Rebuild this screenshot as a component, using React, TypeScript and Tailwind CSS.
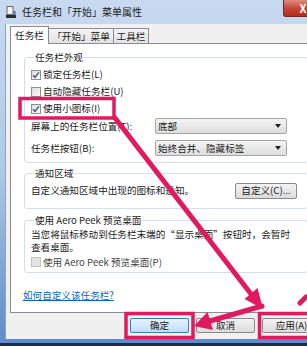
const Check = ({ checked, disabled }: { checked?: boolean; disabled?: boolean }) => (
  <span
    className={`flex h-[10px] w-[10px] shrink-0 items-center justify-center border ${
      disabled
        ? "border-[#c4c4c4] bg-[#e4e4e4]"
        : "border-[#8e8f8f] bg-gradient-to-br from-[#dcdcdc] to-[#fbfbfb]"
    }`}
  >
    {checked && (
      <svg width="8" height="8" viewBox="0 0 8 8">
        <path d="M1 4.2 L3 6.3 L7 1.4" fill="none" stroke="#4b5d7d" strokeWidth="1.5" />
      </svg>
    )}
  </span>
);

const Combo = ({ value }: { value: string }) => (
  <div className="flex h-[16px] w-[132px] items-center justify-between rounded-[2px] border border-[#a5a5a5] bg-gradient-to-b from-[#f4f4f4] to-[#dedede] pl-[2px] pr-[5px]">
    <span>{value}</span>
    <svg width="6" height="4" viewBox="0 0 6 4">
      <path d="M0 0 H6 L3 4 Z" fill="#1e1e1e" />
    </svg>
  </div>
);

const Btn = ({ label, primary }: { label: string; primary?: boolean }) => (
  <div
    className={`flex h-[15px] w-[59px] items-center justify-center rounded-[2px] border ${
      primary
        ? "border-[#3c7fb1] bg-gradient-to-b from-[#e6f3fd] to-[#bfdff8]"
        : "border-[#8a8a8a] bg-gradient-to-b from-[#f3f3f3] to-[#dcdcdc]"
    }`}
  >
    {label}
  </div>
);

export default function App() {
  return (
    <div className="relative h-[346px] w-[307px] overflow-hidden bg-[#1c2d3c] font-['Noto_Sans_CJK_SC',sans-serif] text-[9.6px] text-[#1b1b1b]">
      <div className="flex h-[343px] w-[330px] flex-col bg-gradient-to-b from-[#c8daf0] via-[#b0c8e8] to-[#5f8bc8]">
        {/* title bar */}
        <div className="flex h-[24px] items-center pl-[6px]">
          <svg width="10" height="12" viewBox="0 0 10 12">
            <rect x="1" y="0.5" width="6" height="8" fill="#f4f4f4" stroke="#6b6b6b" />
            <rect x="0" y="9" width="10" height="3" fill="#2c2c2c" />
            <rect x="7.5" y="5" width="2" height="4" fill="#3d74b8" />
          </svg>
          <span className="ml-[6px] text-[10px] leading-[12px] text-[#1a1a1a]">任务栏和「开始」菜单属性</span>
          <div className="mr-[7px] ml-auto flex h-[17px] w-[40px] items-center justify-center self-start rounded-b-[3px] border border-t-0 border-[#6b2a26] bg-gradient-to-b from-[#e08b7c] via-[#c8473a] to-[#b8281e]">
            <span className="text-[11px] font-bold leading-none text-white">X</span>
          </div>
        </div>

        {/* window body */}
        <div className="ml-[5px] mr-[5px] flex h-[315px] flex-col border-l border-[#8aa4c4] bg-[#f0f0f0] pl-[4px] pt-[2px]">
          {/* tabs */}
          <div className="relative z-10 flex h-[17px] items-end">
            <div className="-mb-[1px] flex h-[18px] w-[39px] items-center justify-center border border-b-0 border-[#898c95] bg-white">
              任务栏
            </div>
            <div className="flex h-[15px] w-[65px] items-center justify-center border border-b-0 border-l-0 border-[#898c95] bg-gradient-to-b from-[#f4f4f4] to-[#e2e2e2]">
              「开始」菜单
            </div>
            <div className="flex h-[15px] w-[35px] items-center justify-center border border-b-0 border-l-0 border-[#898c95] bg-gradient-to-b from-[#f4f4f4] to-[#e2e2e2]">
              工具栏
            </div>
          </div>

          {/* tab panel */}
          <div className="flex h-[270px] w-[312px] flex-col border border-[#898c95] bg-white px-[13px]">
            <fieldset className="mt-[7px] rounded-[3px] border border-[#d5dfe5] pb-[6px] pl-[6px] pr-[10px]">
              <legend className="ml-[3px] px-[1px] leading-[12px]">任务栏外观</legend>
              <div className="mt-[3px] flex h-[17px] items-center gap-[2px]">
                <Check checked />
                <span>锁定任务栏(L)</span>
              </div>
              <div className="flex h-[17px] items-center gap-[2px]">
                <Check />
                <span>自动隐藏任务栏(U)</span>
              </div>
              <div className="flex h-[17px] items-center gap-[2px]">
                <Check checked />
                <span>使用小图标(I)</span>
              </div>
              <div className="mt-[1px] flex h-[16px] items-center">
                <span className="w-[124px]">屏幕上的任务栏位置(T):</span>
                <Combo value="底部" />
              </div>
              <div className="mt-[6px] flex h-[16px] items-center">
                <span className="w-[124px]">任务栏按钮(B):</span>
                <Combo value="始终合并、隐藏标签" />
              </div>
            </fieldset>

            <fieldset className="mt-[4px] rounded-[3px] border border-[#d5dfe5] pb-[9px] pl-[6px] pr-[10px]">
              <legend className="ml-[3px] px-[1px] leading-[12px]">通知区域</legend>
              <div className="mt-[3px] flex h-[17px] items-center justify-between">
                <span>自定义通知区域中出现的图标和通知。</span>
                <div className="flex h-[16px] w-[62px] items-center justify-center rounded-[2px] border border-[#8a8a8a] bg-gradient-to-b from-[#f3f3f3] to-[#dcdcdc]">
                  自定义(C)...
                </div>
              </div>
            </fieldset>

            <fieldset className="mt-[5px] rounded-[3px] border border-[#d5dfe5] pb-[3px] pl-[6px] pr-[10px]">
              <legend className="ml-[3px] px-[1px] leading-[12px]">使用 Aero Peek 预览桌面</legend>
              <p className="mt-[2px] whitespace-nowrap leading-[13px]">
                当您将鼠标移动到任务栏末端的“显示桌面”按钮时，会暂时
                <br />
                查看桌面。
              </p>
              <div className="mt-[1px] flex h-[14px] items-center gap-[2px] text-[#444]">
                <Check disabled />
                <span>使用 Aero Peek 预览桌面(P)</span>
              </div>
            </fieldset>

            <a className="-ml-[1px] mt-[16px] self-start leading-[12px] text-[#0b66c2] underline">如何自定义该任务栏?</a>
          </div>

          {/* dialog buttons */}
          <div className="ml-[120px] mt-[5px] flex gap-[7px]">
            <Btn label="确定" primary />
            <Btn label="取消" />
            <Btn label="应用(A)" />
          </div>
        </div>
      </div>

      {/* annotations */}
      <svg className="pointer-events-none absolute inset-0" width="307" height="346" viewBox="0 0 307 346">
        <g fill="none" stroke="#e3195f" strokeWidth="3.5">
          <rect x="20" y="98.5" width="94" height="19.5" />
          <rect x="126" y="313.5" width="67" height="24" />
          <rect x="259.5" y="313.5" width="52" height="24" />
        </g>
        <g stroke="#e3195f" strokeWidth="5" strokeLinecap="round">
          <line x1="115" y1="118" x2="251" y2="294" />
          <line x1="262" y1="306" x2="210" y2="321" />
          <line x1="300" y1="303" x2="306" y2="297" />
        </g>
        <g fill="#e3195f">
          <polygon points="263,309 244.5,299 257.5,288" />
          <polygon points="194,326 207.5,312 213,330" />
        </g>
      </svg>
    </div>
  );
}
